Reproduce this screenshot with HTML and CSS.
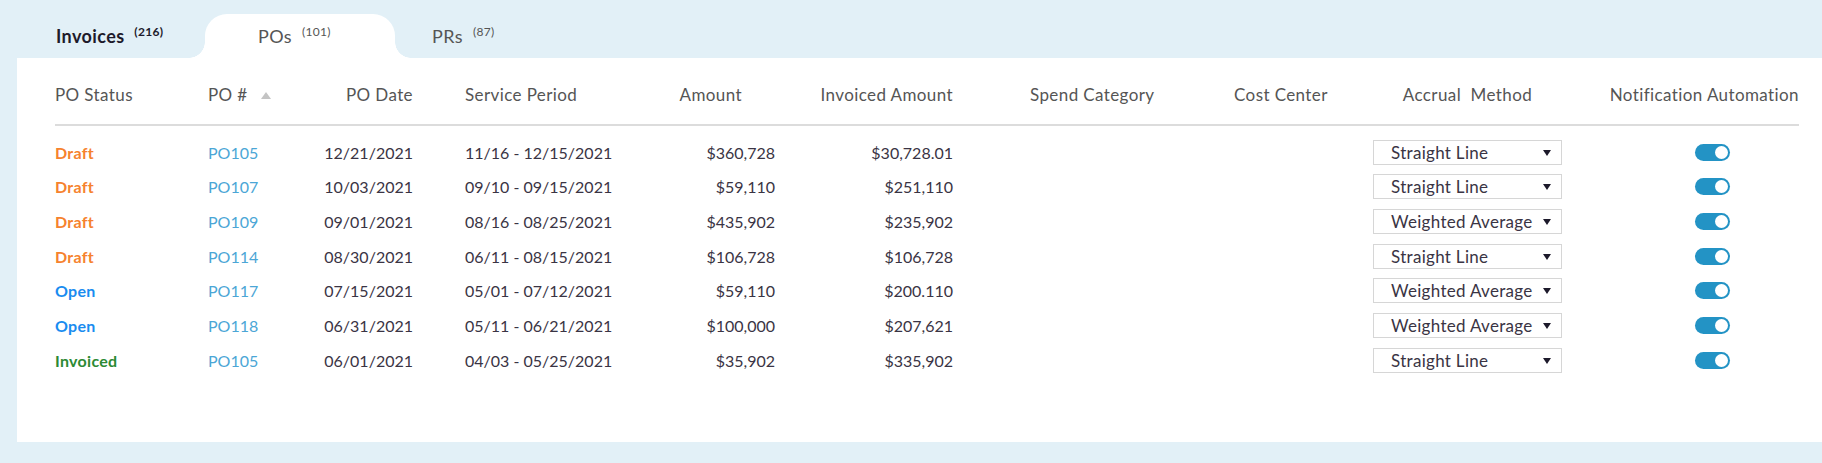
FILE: index.html
```html
<!DOCTYPE html>
<html lang="en">
<head>
    <meta charset="UTF-8">
    <title>Purchase Orders</title>
    <link rel="stylesheet" href="styles.css">
</head>
<body>
    <div class="tabs">
        <div class="tab tab-first">Invoices <sup>(216)</sup></div>
        <div class="tab tab-active">POs <sup>(101)</sup></div>
        <div class="tab tab-last">PRs <sup>(87)</sup></div>
    </div>

    <div class="panel">
        <div class="row head">
            <div>PO Status</div>
            <div>PO # <span class="sort-up"></span></div>
            <div class="right">PO Date</div>
            <div class="pad-period">Service Period</div>
            <div class="right amount-head">Amount</div>
            <div class="right">Invoiced Amount</div>
            <div class="pad-spend">Spend Category</div>
            <div>Cost Center</div>
            <div class="center">Accrual&nbsp; Method</div>
            <div class="right">Notification Automation</div>
        </div>

        <div class="rows">
            <div class="row">
                <div class="status draft">Draft</div>
                <div class="po-link">PO105</div>
                <div class="right">12/21/2021</div>
                <div class="pad-period">11/16 - 12/15/2021</div>
                <div class="right">$360,728</div>
                <div class="right">$30,728.01</div>
                <div></div>
                <div></div>
                <div class="select">Straight Line <span class="caret"></span></div>
                <div><span class="toggle"></span></div>
            </div>
            <div class="row">
                <div class="status draft">Draft</div>
                <div class="po-link">PO107</div>
                <div class="right">10/03/2021</div>
                <div class="pad-period">09/10 - 09/15/2021</div>
                <div class="right">$59,110</div>
                <div class="right">$251,110</div>
                <div></div>
                <div></div>
                <div class="select">Straight Line <span class="caret"></span></div>
                <div><span class="toggle"></span></div>
            </div>
            <div class="row">
                <div class="status draft">Draft</div>
                <div class="po-link">PO109</div>
                <div class="right">09/01/2021</div>
                <div class="pad-period">08/16 - 08/25/2021</div>
                <div class="right">$435,902</div>
                <div class="right">$235,902</div>
                <div></div>
                <div></div>
                <div class="select">Weighted Average <span class="caret"></span></div>
                <div><span class="toggle"></span></div>
            </div>
            <div class="row">
                <div class="status draft">Draft</div>
                <div class="po-link">PO114</div>
                <div class="right">08/30/2021</div>
                <div class="pad-period">06/11 - 08/15/2021</div>
                <div class="right">$106,728</div>
                <div class="right">$106,728</div>
                <div></div>
                <div></div>
                <div class="select">Straight Line <span class="caret"></span></div>
                <div><span class="toggle"></span></div>
            </div>
            <div class="row">
                <div class="status open">Open</div>
                <div class="po-link">PO117</div>
                <div class="right">07/15/2021</div>
                <div class="pad-period">05/01 - 07/12/2021</div>
                <div class="right">$59,110</div>
                <div class="right">$200.110</div>
                <div></div>
                <div></div>
                <div class="select">Weighted Average <span class="caret"></span></div>
                <div><span class="toggle"></span></div>
            </div>
            <div class="row">
                <div class="status open">Open</div>
                <div class="po-link">PO118</div>
                <div class="right">06/31/2021</div>
                <div class="pad-period">05/11 - 06/21/2021</div>
                <div class="right">$100,000</div>
                <div class="right">$207,621</div>
                <div></div>
                <div></div>
                <div class="select">Weighted Average <span class="caret"></span></div>
                <div><span class="toggle"></span></div>
            </div>
            <div class="row">
                <div class="status invoiced">Invoiced</div>
                <div class="po-link">PO105</div>
                <div class="right">06/01/2021</div>
                <div class="pad-period">04/03 - 05/25/2021</div>
                <div class="right">$35,902</div>
                <div class="right">$335,902</div>
                <div></div>
                <div></div>
                <div class="select">Straight Line <span class="caret"></span></div>
                <div><span class="toggle"></span></div>
            </div>
        </div>
    </div>
</body>
</html>
```

FILE: styles.css
```css
body {
    margin: 0;
    background: #e2f0f7;
    font-family: Lato, "Noto Sans", sans-serif;
    color: #3a3444;
    height: 463px;
    overflow: hidden;
}

/* tabs */
.tabs {
    display: flex;
    align-items: flex-end;
    height: 58px;
    padding-left: 56px;
}
.tab {
    box-sizing: border-box;
    height: 44px;
    padding-top: 10px;
    font-size: 18px;
    letter-spacing: 0.4px;
    color: #555;
}
.tab sup {
    font-size: 12px;
    margin-left: 5px;
    letter-spacing: 0.3px;
}
.tab-first {
    width: 149px;
    color: #1d1a2b;
    font-weight: 700;
}
.tab-active {
    position: relative;
    width: 190px;
    padding-left: 53px;
    background: #fff;
    border-radius: 22px 22px 0 0;
}
.tab-active::before,
.tab-active::after {
    content: "";
    position: absolute;
    bottom: 0;
    width: 16px;
    height: 16px;
}
.tab-active::before {
    left: -16px;
    background: radial-gradient(circle at 0 0, transparent 15.5px, #fff 16px);
}
.tab-active::after {
    right: -16px;
    background: radial-gradient(circle at 100% 0, transparent 15.5px, #fff 16px);
}
.tab-last {
    padding-left: 37px;
}

/* panel */
.panel {
    box-sizing: border-box;
    margin-left: 17px;
    height: 384px;
    background: #fff;
    padding: 21px 23px 0 38px;
}
.row {
    display: grid;
    grid-template-columns: 153px 92px 113px 227px 135px 178px 281px 139px 189px 1fr;
    align-items: center;
    font-size: 16px;
}
.head {
    height: 30px;
    padding-bottom: 15px;
    border-bottom: 2px solid #dcdcdc;
    color: #555;
    font-size: 17px;
    letter-spacing: 0.4px;
}
.rows {
    padding-top: 9px;
}
.rows .row {
    height: 34.67px;
}

.right { text-align: right; }
.center { text-align: center; }
.pad-period { padding-left: 52px; }
.pad-spend { padding-left: 77px; }
.amount-head { padding-right: 33px; }

.sort-up {
    display: inline-block;
    margin-left: 9px;
    border-left: 5px solid transparent;
    border-right: 5px solid transparent;
    border-bottom: 7px solid #c4c4c4;
    vertical-align: 2px;
}

.status {
    font-weight: 700;
    letter-spacing: 0.3px;
}
.draft { color: #f6822e; }
.open { color: #1a8cf0; }
.invoiced { color: #2c8a34; }
.po-link { color: #4ba6d6; }

.select {
    position: relative;
    box-sizing: border-box;
    height: 25px;
    line-height: 23px;
    border: 1px solid #d6d6d6;
    padding-left: 17px;
    font-size: 17px;
    letter-spacing: 0.3px;
}
.caret {
    position: absolute;
    right: 10px;
    top: 9px;
    border-left: 4px solid transparent;
    border-right: 4px solid transparent;
    border-top: 6px solid #1d1a2b;
}

.toggle {
    position: relative;
    display: block;
    margin-left: 133px;
    width: 35px;
    height: 17px;
    border-radius: 9px;
    background: #2393c5;
}
.toggle::after {
    content: "";
    position: absolute;
    right: 2px;
    top: 2px;
    width: 13px;
    height: 13px;
    border-radius: 50%;
    background: #fff;
}
```
